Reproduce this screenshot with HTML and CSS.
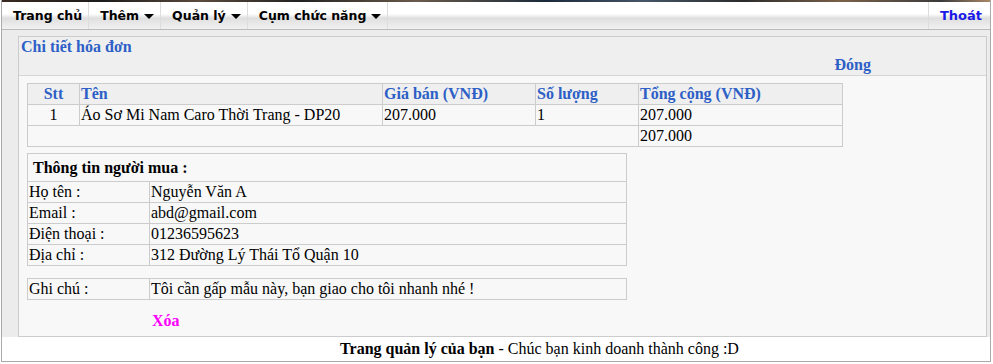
FILE: index.html
```html
<!DOCTYPE html>
<html lang="vi">
<head>
    <meta charset="UTF-8">
    <meta name="viewport" content="width=device-width, initial-scale=1.0">
    <title>Chi tiết hóa đơn</title>
    <link rel="stylesheet" href="styles.css">
</head>
<body>
    <div class="wrapper">
        <div class="banner-strip"></div>
        <ul class="menu">
            <li class="menu-item">Trang chủ</li>
            <li class="menu-item has-sub">Thêm <span class="caret"></span></li>
            <li class="menu-item has-sub">Quản lý <span class="caret"></span></li>
            <li class="menu-item has-sub">Cụm chức năng <span class="caret"></span></li>
            <li class="menu-spacer"></li>
            <li class="menu-item logout">Thoát</li>
        </ul>

        <div class="content">
            <div class="panel">
                <div class="panel-head">
                    <div class="panel-title">Chi tiết hóa đơn</div>
                    <div class="panel-close">Đóng</div>
                </div>
                <div class="panel-body">
                    <table class="grid items">
                        <tr class="head">
                            <th class="c-stt">Stt</th>
                            <th class="c-name">Tên</th>
                            <th class="c-price">Giá bán (VNĐ)</th>
                            <th class="c-qty">Số lượng</th>
                            <th class="c-total">Tổng cộng (VNĐ)</th>
                        </tr>
                        <tr>
                            <td class="center">1</td>
                            <td>Áo Sơ Mi Nam Caro Thời Trang - DP20</td>
                            <td>207.000</td>
                            <td>1</td>
                            <td>207.000</td>
                        </tr>
                        <tr>
                            <td colspan="4"></td>
                            <td>207.000</td>
                        </tr>
                    </table>

                    <table class="grid info">
                        <tr>
                            <th class="info-head" colspan="2">Thông tin người mua :</th>
                        </tr>
                        <tr><td class="label">Họ tên :</td><td>Nguyễn Văn A</td></tr>
                        <tr><td class="label">Email :</td><td>abd@gmail.com</td></tr>
                        <tr><td class="label">Điện thoại :</td><td>01236595623</td></tr>
                        <tr><td class="label">Địa chỉ :</td><td>312 Đường Lý Thái Tổ Quận 10</td></tr>
                    </table>

                    <table class="grid info note">
                        <tr><td class="label">Ghi chú :</td><td>Tôi cần gấp mẫu này, bạn giao cho tôi nhanh nhé !</td></tr>
                    </table>

                    <div class="actions"><span class="delete">Xóa</span></div>
                </div>
            </div>
        </div>

        <div class="footer"><strong>Trang quản lý của bạn</strong> - Chúc bạn kinh doanh thành công :D</div>
    </div>
</body>
</html>
```

FILE: styles.css
```css
body {
    margin: 0;
    padding: 0;
    font-family: "Liberation Serif", "Times New Roman", serif;
    font-size: 16px;
    color: #000;
    background: #fff;
}

.wrapper {
    width: 990px;
    margin: 0 0 0 1px;
    box-sizing: border-box;
    border-left: 1px solid #aaa;
    border-right: 1px solid #aaa;
    border-bottom: 1px solid #aaa;
}

.banner-strip {
    height: 2px;
    background: linear-gradient(90deg, #3a2a20 0%, #1c1c1c 10%, #5b4a3c 20%, #222 30%, #6a5a4a 42%, #1a2a3a 55%, #445566 65%, #2b2b2b 75%, #7a6048 85%, #3b3b3b 95%, #aa8866 100%);
}

/* menu */
.menu {
    list-style: none;
    margin: 0;
    padding: 0;
    display: flex;
    height: 27px;
    border-bottom: 1px solid #bbb;
    background: linear-gradient(#fff 0%, #fff 44%, #dedede 60%, #e6e6e6 74%, #f1f1f1 100%);
    font-family: "DejaVu Sans", Verdana, sans-serif;
    font-weight: bold;
    font-size: 12.5px;
}

.menu-item {
    display: flex;
    align-items: center;
    padding: 0 6px 0 11px;
    border-right: 1px solid #ddd;
    white-space: nowrap;
}

.caret {
    display: inline-block;
    width: 0;
    height: 0;
    margin-left: 5px;
    margin-top: 2px;
    border-left: 5px solid transparent;
    border-right: 5px solid transparent;
    border-top: 5px solid #000;
}

.menu-spacer {
    flex: 1;
}

.menu-item.logout {
    border-right: none;
    border-left: 1px solid #ddd;
    padding: 0 8px 0 11px;
    color: #1a1ae6;
    font-size: 13px;
}

/* content */
.content {
    background: #ececec;
    padding: 6px 3px 0 16px;
}

.panel {
    border: 1px solid #ccc;
    background: #f8f8f8;
}

.panel-head {
    background: #efefef;
    border-bottom: 1px solid #d6d6d6;
    height: 38px;
    color: #2d5fc6;
    font-weight: bold;
    line-height: 18px;
}

.panel-title {
    padding: 1px 0 0 2px;
}

.panel-close {
    text-align: right;
    padding-right: 115px;
}

.panel-body {
    padding: 7px 0 0 8px;
    height: 260px;
    box-sizing: border-box;
}

.grid {
    border-collapse: collapse;
    border: 1px solid #ccc;
    line-height: 18px;
}

.grid th,
.grid td {
    border: 1px solid #ccc;
    padding: 1px 1px;
    text-align: left;
    height: 18px;
}

.items {
    width: 816px;
}

.items .head th {
    background: #efefef;
    color: #2d5fc6;
    font-weight: bold;
}

.c-stt { width: 49px; }
.c-name { width: 300px; }
.c-price { width: 150px; }
.c-qty { width: 100px; }

.items .c-stt,
.items .center {
    text-align: center;
}

.info {
    width: 600px;
    margin-top: 6px;
}

.info .info-head {
    padding: 5px 5px 4px 5px;
    height: 18px;
}

.info .label {
    width: 119px;
}

.info.note {
    margin-top: 12px;
}

.actions {
    padding: 12px 0 0 125px;
    line-height: 18px;
}

.delete {
    color: #ff00ff;
    font-weight: bold;
}

.footer {
    text-align: center;
    padding: 3px 0 4px 87px;
    line-height: 17px;
}
```
